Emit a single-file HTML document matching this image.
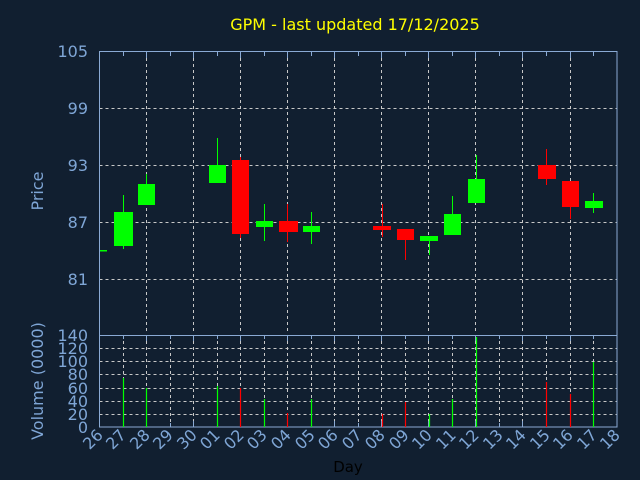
<!DOCTYPE html>
<html><head><meta charset="utf-8"><style>
html,body{margin:0;padding:0;background:#111f30;}
svg{display:block;}
text{font-family:"DejaVu Sans","Liberation Sans",sans-serif;}
</style></head><body>
<svg width="640" height="480" viewBox="0 0 640 480" xmlns="http://www.w3.org/2000/svg">
<rect width="640" height="480" fill="#111f30"/>
<text x="355" y="30" font-size="16" fill="#ffff00" text-anchor="middle">GPM - last updated 17/12/2025</text>
<g stroke="#c8c8c8" stroke-width="1" stroke-dasharray="3,3" fill="none">
<path d="M99.5 108.5H617M99.5 165.5H617M99.5 222.5H617M99.5 279.5H617"/>
<path d="M146.5 52V334M193.5 52V334M240.5 52V334M287.5 52V334M334.5 52V334M381.5 52V334M428.5 52V334M475.5 52V334M522.5 52V334M570.5 52V334"/>
<path d="M99.5 414.5H617M99.5 401.5H617M99.5 388.5H617M99.5 374.5H617M99.5 361.5H617M99.5 348.5H617"/>
<path d="M123.5 335V427M146.5 335V427M170.5 335V427M193.5 335V427M217.5 335V427M240.5 335V427M264.5 335V427M287.5 335V427M311.5 335V427M334.5 335V427M358.5 335V427M381.5 335V427M405.5 335V427M428.5 335V427M452.5 335V427M475.5 335V427M499.5 335V427M522.5 335V427M546.5 335V427M570.5 335V427M593.5 335V427"/>
</g>
<g stroke="#8aaad4" stroke-width="1" fill="none">
<rect x="99.5" y="51.5" width="517.5" height="375.5"/>
<path d="M99.5 335.5H617"/>
<path d="M123.5 52v4M146.5 52v6M170.5 52v4M193.5 52v6M217.5 52v4M240.5 52v6M264.5 52v4M287.5 52v6M311.5 52v4M334.5 52v6M358.5 52v4M381.5 52v6M405.5 52v4M428.5 52v6M452.5 52v4M475.5 52v6M499.5 52v4M522.5 52v6M546.5 52v4M570.5 52v6M593.5 52v4"/>
<path d="M123.5 427v-4M146.5 427v-6M170.5 427v-4M193.5 427v-6M217.5 427v-4M240.5 427v-6M264.5 427v-4M287.5 427v-6M311.5 427v-4M334.5 427v-6M358.5 427v-4M381.5 427v-6M405.5 427v-4M428.5 427v-6M452.5 427v-4M475.5 427v-6M499.5 427v-4M522.5 427v-6M546.5 427v-4M570.5 427v-6M593.5 427v-4"/>
<path d="M123.5 335v4M146.5 335v6M170.5 335v4M193.5 335v6M217.5 335v4M240.5 335v6M264.5 335v4M287.5 335v6M311.5 335v4M334.5 335v6M358.5 335v4M381.5 335v6M405.5 335v4M428.5 335v6M452.5 335v4M475.5 335v6M499.5 335v4M522.5 335v6M546.5 335v4M570.5 335v6M593.5 335v4"/>
</g>
<g fill="#7fa6d6" font-size="16" text-anchor="end">
<text x="88" y="57">105</text><text x="88" y="114">99</text><text x="88" y="171">93</text><text x="88" y="228">87</text><text x="88" y="285">81</text>
<text x="88" y="341">140</text><text x="88" y="354">120</text><text x="88" y="367">100</text><text x="88" y="380">80</text><text x="88" y="394">60</text><text x="88" y="407">40</text><text x="88" y="420">20</text><text x="88" y="433">0</text>
</g>
<text transform="translate(43,191) rotate(-90)" font-size="16" fill="#7fa6d6" text-anchor="middle">Price</text>
<text transform="translate(43,381) rotate(-90)" font-size="16" fill="#7fa6d6" text-anchor="middle">Volume (0000)</text>
<text x="348" y="472" font-size="15" fill="#000" text-anchor="middle">Day</text>
<g fill="#7fa6d6" font-size="16" text-anchor="end">
<text transform="translate(104,436) rotate(-45)">26</text>
<text transform="translate(127,436) rotate(-45)">27</text>
<text transform="translate(151,436) rotate(-45)">28</text>
<text transform="translate(174,436) rotate(-45)">29</text>
<text transform="translate(198,436) rotate(-45)">30</text>
<text transform="translate(221,436) rotate(-45)">01</text>
<text transform="translate(245,436) rotate(-45)">02</text>
<text transform="translate(268,436) rotate(-45)">03</text>
<text transform="translate(292,436) rotate(-45)">04</text>
<text transform="translate(316,436) rotate(-45)">05</text>
<text transform="translate(339,436) rotate(-45)">06</text>
<text transform="translate(363,436) rotate(-45)">07</text>
<text transform="translate(386,436) rotate(-45)">08</text>
<text transform="translate(410,436) rotate(-45)">09</text>
<text transform="translate(433,436) rotate(-45)">10</text>
<text transform="translate(457,436) rotate(-45)">11</text>
<text transform="translate(480,436) rotate(-45)">12</text>
<text transform="translate(504,436) rotate(-45)">13</text>
<text transform="translate(527,436) rotate(-45)">14</text>
<text transform="translate(551,436) rotate(-45)">15</text>
<text transform="translate(574,436) rotate(-45)">16</text>
<text transform="translate(598,436) rotate(-45)">17</text>
<text transform="translate(621,436) rotate(-45)">18</text>
</g>
<!-- candles green -->
<g fill="#00ff00" stroke="#00ff00" stroke-width="1">
<rect x="100" y="250" width="7" height="1.5" stroke="none"/>
<path d="M123.5 195V249M146.5 174V205M217.5 138V183M264.5 204V241M311.5 212V244M429.5 236V255M452.5 196V235M476.5 155V203M593.5 193V213" fill="none"/>
<rect x="114" y="212" width="19" height="34" stroke="none"/>
<rect x="138" y="184" width="17" height="21" stroke="none"/>
<rect x="209" y="165" width="17" height="18" stroke="none"/>
<rect x="256" y="221" width="17" height="6" stroke="none"/>
<rect x="303" y="226" width="17" height="6" stroke="none"/>
<rect x="420" y="236" width="18" height="5" stroke="none"/>
<rect x="444" y="214" width="17" height="21" stroke="none"/>
<rect x="468" y="179" width="17" height="24" stroke="none"/>
<rect x="585" y="201" width="18" height="7" stroke="none"/>
</g>
<g fill="#ff0000" stroke="#ff0000" stroke-width="1">
<path d="M240.5 157V238M287.5 204V242M382.5 204V237M405.5 229V260M546.5 149V185M570.5 181V219" fill="none"/>
<rect x="232" y="160" width="17" height="74" stroke="none"/>
<rect x="279" y="221" width="19" height="11" stroke="none"/>
<rect x="373" y="226" width="18" height="4" stroke="none"/>
<rect x="397" y="229" width="17" height="11" stroke="none"/>
<rect x="538" y="165" width="18" height="14" stroke="none"/>
<rect x="562" y="181" width="17" height="26" stroke="none"/>
</g>
<!-- volume -->
<g stroke="#00ff00" stroke-width="1.2" fill="none">
<path d="M123.5 378V427M146.5 388V427M217.5 386V427M264.5 399V427M311.5 399V427M429.5 414V427M452.5 399V427M476.5 337V427M593.5 362V427"/>
</g>
<g stroke="#ff0000" stroke-width="1.2" fill="none">
<path d="M240.5 388V427M287.5 413V427M382.5 414V427M405.5 402V427M546.5 382V427M570.5 394V427"/>
</g>
</svg>
</body></html>
